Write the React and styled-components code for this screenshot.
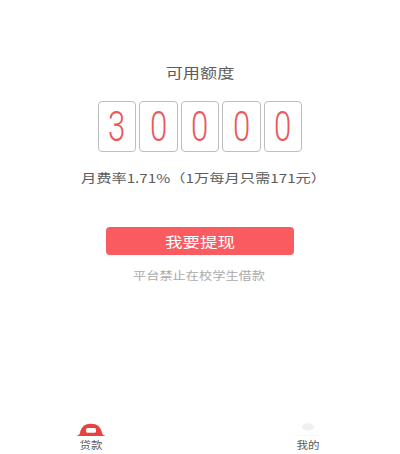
import React from 'react'
import styled, { createGlobalStyle } from 'styled-components'

const Global = createGlobalStyle`
  html, body { margin: 0; padding: 0; background: #fff; }
  body { font-family: "Noto Sans CJK SC", "Liberation Sans", sans-serif; }
`
const Page = styled.div`
  width: 400px;
  height: 454px;
  display: flex;
  flex-direction: column;
  align-items: center;
  overflow: hidden;
`
const Title = styled.h1`
  margin: 62px 0 0;
  height: 20px;
  line-height: 20px;
  font-size: 13.5px;
  font-weight: 400;
  color: #5c5c5c;
  transform: scaleX(1.27);
`
const Digits = styled.div`
  margin-top: 19px;
  display: flex;
  gap: 3px;
`
const Digit = styled.div`
  width: 38.5px;
  height: 51px;
  box-sizing: border-box;
  border: 1px solid #bdbdbd;
  border-radius: 4px;
  display: flex;
  align-items: center;
  justify-content: center;
  color: #e8585c;
  font-family: Roboto, sans-serif;
  font-size: 42px;
  font-weight: 300;
  line-height: 49px;
  & > span { display: block; transform: scaleX(0.74); }
`
const Rate = styled.p`
  margin: 16px 0 0 7px;
  height: 20px;
  line-height: 20px;
  font-size: 12px;
  color: #5c5c5c;
  white-space: nowrap;
  transform: scaleX(1.27);
`
const Withdraw = styled.button`
  margin-top: 39px;
  width: 188px;
  height: 28px;
  border: 0;
  border-radius: 4px;
  background: #f95b60;
  padding: 0;
  display: flex;
  align-items: center;
  justify-content: center;
`
const WithdrawLabel = styled.span`
  color: #fff;
  font-family: "Noto Sans CJK SC", sans-serif;
  font-size: 14px;
  transform: scaleX(1.25);
`
const Notice = styled.p`
  margin: 11px 0 0 -2px;
  height: 18px;
  line-height: 18px;
  font-size: 11px;
  color: #ababab;
  transform: scaleX(1.2);
`
const TabBar = styled.nav`
  margin-top: auto;
  width: 100%;
  height: 34px;
  box-sizing: border-box;
  padding-top: 3px;
  display: flex;
  justify-content: space-between;
`
const Tab = styled.div`
  width: 34px;
  margin: ${p => p.$side === 'left' ? '0 0 0 74px' : '0 75px 0 0'};
  display: flex;
  flex-direction: column;
  align-items: center;
`
const TabIcon = styled.svg`
  width: 30px;
  height: 13px;
  margin-bottom: 2px;
  display: block;
  flex: none;
`
const TabLabel = styled.span`
  color: #5c5c5c;
  font-size: 10px;
  line-height: 14px;
  white-space: nowrap;
  transform: scaleX(1.15);
`

function LoanIcon() {
  return (
    <TabIcon viewBox="0 0 30 13">
      <path d="M1 12.500c1.800-.2 2.500-.8 3-2.500C5 4 9 .8 15 .8S25 4 26 10c.5 1.700 1.200 2.300 3 2.500v.5H1z" fill="#e8413f" />
      <rect x="10" y="5" width="10" height="4.800" rx="1.500" fill="#fff" />
    </TabIcon>
  )
}

function MineIcon() {
  return (
    <TabIcon viewBox="0 0 30 13">
      <ellipse cx="15" cy="4" rx="6" ry="3.700" fill="#f0f0f0" />
      <rect x="3" y="12" width="24" height="1" fill="#f9f9f9" />
    </TabIcon>
  )
}

export default function App() {
  return (
    <>
      <Global />
      <Page>
        <Title>可用额度</Title>
        <Digits>
          {['3', '0', '0', '0', '0'].map((d, i) => (
            <Digit key={i}><span>{d}</span></Digit>
          ))}
        </Digits>
        <Rate>月费率1.71%（1万每月只需171元）</Rate>
        <Withdraw><WithdrawLabel>我要提现</WithdrawLabel></Withdraw>
        <Notice>平台禁止在校学生借款</Notice>
        <TabBar>
          <Tab $side="left"><LoanIcon /><TabLabel>贷款</TabLabel></Tab>
          <Tab $side="right"><MineIcon /><TabLabel>我的</TabLabel></Tab>
        </TabBar>
      </Page>
    </>
  )
}
